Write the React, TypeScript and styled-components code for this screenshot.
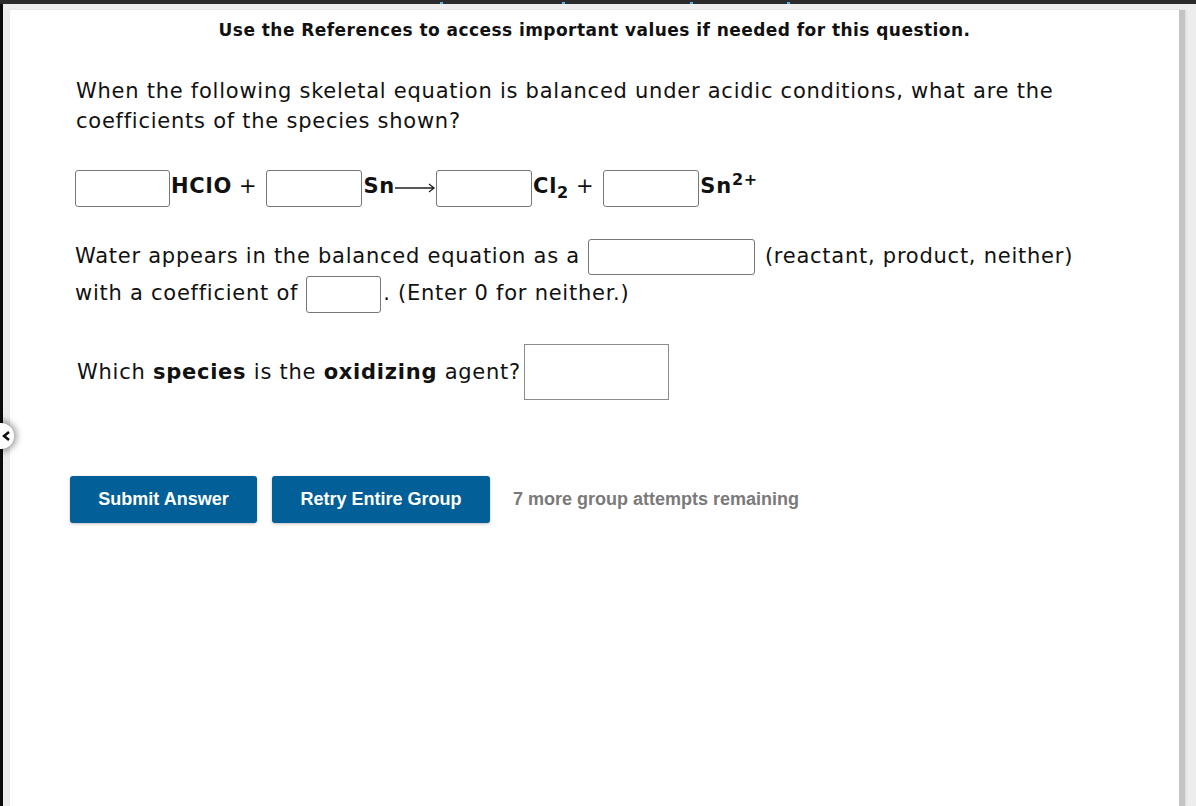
import React from 'react';
import styled, { createGlobalStyle } from 'styled-components';

const GlobalStyle = createGlobalStyle`
  html, body {
    margin: 0;
    padding: 0;
    background: #ededed;
    font-family: "DejaVu Sans", Verdana, sans-serif;
    color: #111;
  }
  #root {
    height: 806px;
    overflow: hidden;
  }
`;

const TopBar = styled.div`
  height: 4px;
  background: #2b2b2b;
  display: flex;
  align-items: flex-end;
  padding-left: 440px;
  gap: 125px;
`;

const LinkBit = styled.span<{ w: number }>`
  width: ${p => p.w}px;
  height: 2px;
  border-left: 3px solid #4fb3e8;
  border-right: 3px solid #4fb3e8;
  box-sizing: border-box;
`;

const Frame = styled.div`
  position: relative;
  display: flex;
  height: 802px;
`;

const LeftEdge = styled.div`
  width: 3px;
  background: #0d0d0d;
  flex-shrink: 0;
`;

const Panel = styled.main`
  margin: 6px 0 0 7px;
  width: 1175px;
  background: #fff;
  border-right: 6px solid #c4c4c4;
  box-shadow: 1px 0 2px #d8d8d8;
  padding: 9px 0 0 65px;
  box-sizing: border-box;
`;

const Notice = styled.p`
  margin: 0 0 0 -65px;
  text-align: center;
  font-weight: bold;
  font-size: 17px;
  line-height: 22px;
  letter-spacing: 0.45px;
`;

const Question = styled.p`
  margin: 35px 0 0 1px;
  font-size: 21px;
  letter-spacing: 0.75px;
  line-height: 30px;
  width: 1040px;
`;

const EqRow = styled.div`
  display: flex;
  align-items: center;
  margin-top: 33px;
  font-size: 21px;
  letter-spacing: 0.75px;
  height: 38px;
`;

const Box = styled.span<{ w: number; h: number; r?: number }>`
  display: inline-block;
  vertical-align: middle;
  width: ${p => p.w}px;
  height: ${p => p.h}px;
  border: 1px solid ${p => (p.r === 0 ? '#8c8c8c' : '#777')};
  border-radius: ${p => (p.r === undefined ? 3 : p.r)}px;
  box-sizing: border-box;
  background: #fff;
`;

const Species = styled.span`
  font-weight: bold;
  margin: -4px 0 0 1px;
  sub, sup {
    font-size: 16px;
  }
  sub {
    vertical-align: -5px;
    line-height: 0;
  }
  sup {
    vertical-align: 8px;
    line-height: 0;
  }
`;

const Plus = styled.span`
  margin: -4px 9px 0 7px;
`;

const WaterBlock = styled.div`
  margin-top: 31px;
  font-size: 21px;
  letter-spacing: 0.75px;
  line-height: 37px;
  width: 1060px;
`;

const InlineBox = styled(Box)<{ ml: number; mr: number }>`
  margin: 0 ${p => p.mr}px 0 ${p => p.ml}px;
`;

const OxRow = styled.div`
  display: flex;
  align-items: center;
  margin: 31px 0 0 2px;
  font-size: 21px;
  letter-spacing: 0.75px;
`;

const Actions = styled.div`
  display: flex;
  align-items: center;
  gap: 15px;
  margin: 76px 0 0 -5px;
  font-family: "Liberation Sans", Arial, sans-serif;
`;

const ActionButton = styled.button<{ w: number }>`
  width: ${p => p.w}px;
  height: 47px;
  border: none;
  border-radius: 3px;
  background: #035f97;
  color: #fff;
  font-family: inherit;
  font-weight: bold;
  font-size: 18px;
  box-shadow: 0 1px 3px rgba(0, 0, 0, 0.25);
`;

const Remaining = styled.span`
  margin-left: 8px;
  color: #7a7a7a;
  font-weight: bold;
  font-size: 18px;
`;

const SideToggle = styled.div`
  position: absolute;
  left: -12px;
  top: 419px;
  width: 26px;
  height: 26px;
  border-radius: 50%;
  background: #fff;
  box-shadow: 0 0 6px 3px rgba(0, 0, 0, 0.35);
  display: flex;
  align-items: center;
  justify-content: flex-end;
  padding-right: 3px;
  box-sizing: border-box;
`;

export default function App() {
  return (
    <>
      <GlobalStyle />
      <TopBar>
        <LinkBit w={125} />
        <LinkBit w={100} />
      </TopBar>
      <Frame>
        <LeftEdge />
        <Panel>
          <Notice>Use the References to access important values if needed for this question.</Notice>
          <Question>
            When the following skeletal equation is balanced under acidic conditions, what are the
            coefficients of the species shown?
          </Question>
          <EqRow>
            <Box w={95} h={37} />
            <Species>HClO</Species>
            <Plus>+</Plus>
            <Box w={96} h={37} />
            <Species>Sn</Species>
            <svg width="41" height="14" viewBox="0 0 41 14">
              <path d="M0 7H39M34 3L39 7L34 11" fill="none" stroke="#222" strokeWidth="1.3" />
            </svg>
            <Box w={96} h={37} />
            <Species>
              Cl<sub>2</sub>
            </Species>
            <Plus>+</Plus>
            <Box w={96} h={37} />
            <Species>
              Sn<sup>2+</sup>
            </Species>
          </EqRow>
          <WaterBlock>
            Water appears in the balanced equation as a
            <InlineBox w={167} h={36} ml={8} mr={10} />
            (reactant, product, neither)
            <br />
            with a coefficient of
            <InlineBox w={75} h={37} ml={8} mr={2} />. (Enter 0 for neither.)
          </WaterBlock>
          <OxRow>
            Which&nbsp;<b>species</b>&nbsp;is the&nbsp;<b>oxidizing</b>&nbsp;agent?
            <Box w={145} h={56} r={0} style={{ marginLeft: 3 }} />
          </OxRow>
          <Actions>
            <ActionButton w={187}>Submit Answer</ActionButton>
            <ActionButton w={218}>Retry Entire Group</ActionButton>
            <Remaining>7 more group attempts remaining</Remaining>
          </Actions>
        </Panel>
        <SideToggle>
          <svg width="9" height="12" viewBox="0 0 9 12">
            <path d="M7 2L2 6L7 10" fill="none" stroke="#111" strokeWidth="2.6" />
          </svg>
        </SideToggle>
      </Frame>
    </>
  );
}
